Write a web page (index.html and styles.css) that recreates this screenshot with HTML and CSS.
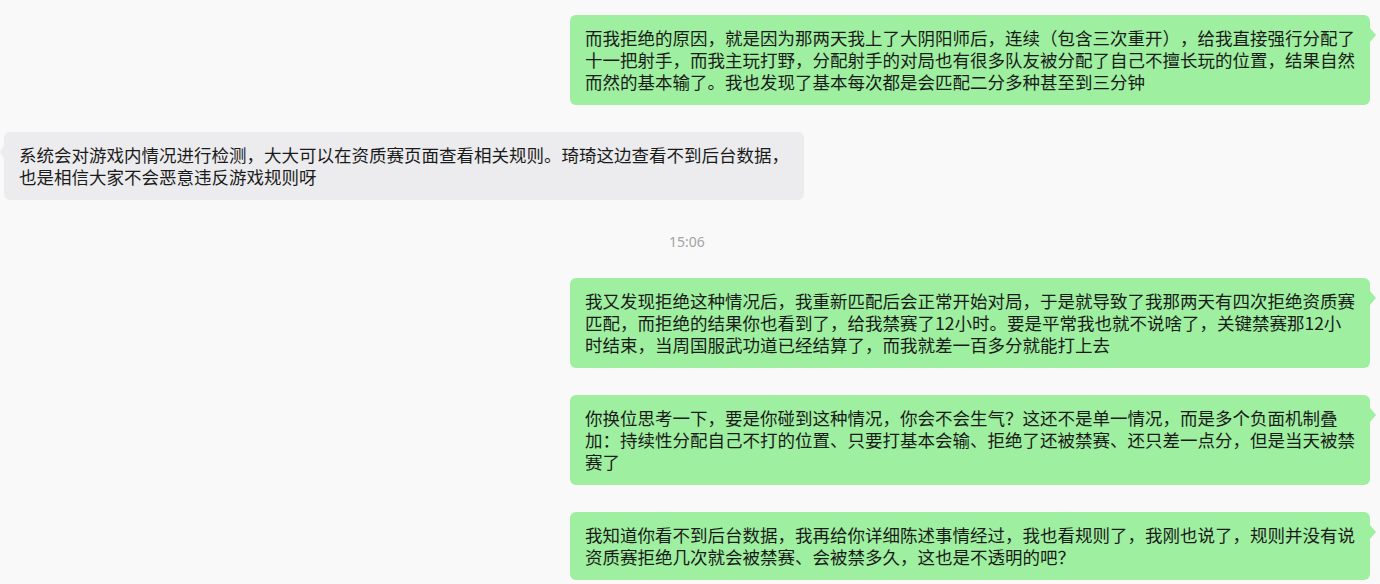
FILE: index.html
```html
<!DOCTYPE html>
<html lang="zh-CN">
<head>
<meta charset="utf-8">
<title>Chat</title>
<link rel="stylesheet" href="styles.css">
</head>
<body>
<div class="chat">
  <div class="row self">
    <div class="bubble">而我拒绝的原因，就是因为那两天我上了大阴阳师后，连续（包含三次重开），给我直接强行分配了十一把射手，而我主玩打野，分配射手的对局也有很多队友被分配了自己不擅长玩的位置，结果自然而然的基本输了。我也发现了基本每次都是会匹配二分多种甚至到三分钟</div>
  </div>
  <div class="row other">
    <div class="bubble">系统会对游戏内情况进行检测，大大可以在资质赛页面查看相关规则。琦琦这边查看不到后台数据，也是相信大家不会恶意违反游戏规则呀</div>
  </div>
  <div class="time">15:06</div>
  <div class="row self">
    <div class="bubble">我又发现拒绝这种情况后，我重新匹配后会正常开始对局，于是就导致了我那两天有四次拒绝资质赛匹配，而拒绝的结果你也看到了，给我禁赛了12小时。要是平常我也就不说啥了，关键禁赛那12小时结束，当周国服武功道已经结算了，而我就差一百多分就能打上去</div>
  </div>
  <div class="row self">
    <div class="bubble">你换位思考一下，要是你碰到这种情况，你会不会生气？这还不是单一情况，而是多个负面机制叠加：持续性分配自己不打的位置、只要打基本会输、拒绝了还被禁赛、还只差一点分，但是当天被禁赛了</div>
  </div>
  <div class="row self">
    <div class="bubble">我知道你看不到后台数据，我再给你详细陈述事情经过，我也看规则了，我刚也说了，规则并没有说资质赛拒绝几次就会被禁赛、会被禁多久，这也是不透明的吧？</div>
  </div>
</div>
</body>
</html>
```
FILE: styles.css
```css
html, body {
  margin: 0;
  padding: 0;
  background: #f9f9f9;
}
body {
  font-family: "Noto Sans CJK SC", "Noto Sans", sans-serif;
  color: #1b1b1b;
  overflow: hidden;
  height: 584px;
}
.chat {
  display: flex;
  flex-direction: column;
  gap: 27px;
  padding: 15px 10px 0 4px;
}
.row {
  display: flex;
}
.row.self {
  justify-content: flex-end;
}
.row.other {
  justify-content: flex-start;
}
.bubble {
  position: relative;
  box-sizing: border-box;
  max-width: 800px;
  padding: 12px 14px 12px 15px;
  font-size: 17.5px;
  line-height: 22px;
  border-radius: 6px;
  word-break: normal;
  text-spacing-trim: space-all;
}
.self .bubble {
  background: #9eef9f;
}
.other .bubble {
  background: #ececee;
}
.bubble::after {
  content: "";
  position: absolute;
  top: 13px;
  width: 0;
  height: 0;
  border-top: 7px solid transparent;
  border-bottom: 7px solid transparent;
}
.self .bubble::after {
  right: -6px;
  border-left: 6px solid #9eef9f;
}
.other .bubble::after {
  left: -4px;
  border-right: 4px solid #ececee;
}
.time {
  text-align: center;
  font-size: 14px;
  line-height: 18px;
  padding-top: 6px;
  color: #a4a4a4;
  font-family: "Noto Sans", "Noto Sans CJK SC", sans-serif;
}
```
